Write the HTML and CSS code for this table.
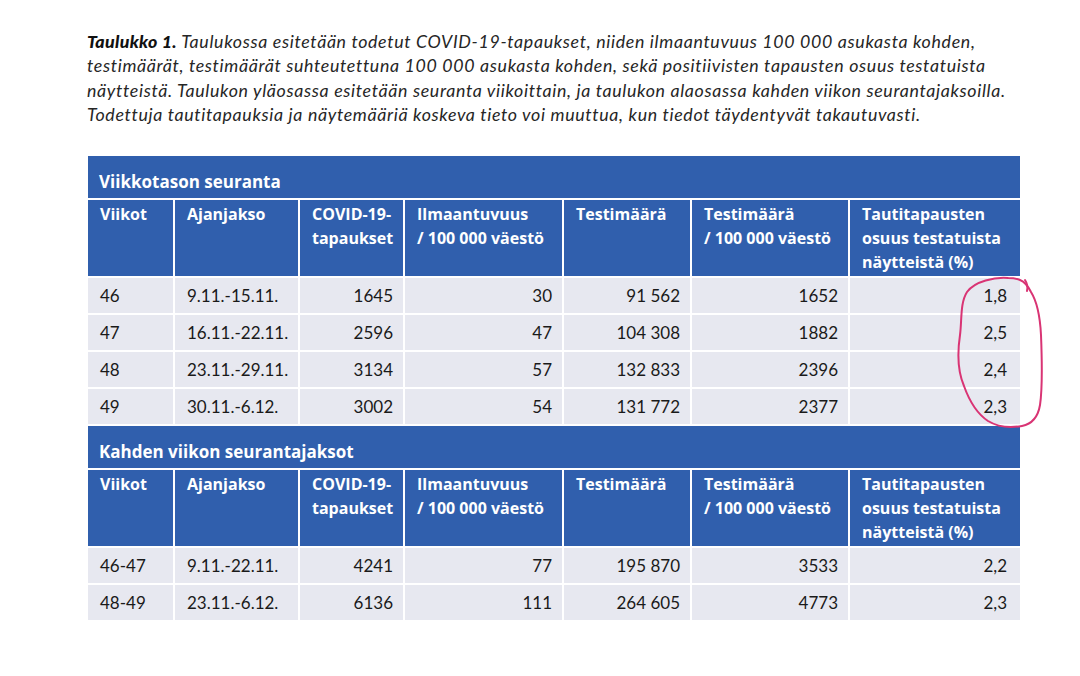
FILE: index.html
```html
<!DOCTYPE html>
<html lang="fi">
<head>
<meta charset="utf-8">
<title>Taulukko 1</title>
<link rel="stylesheet" href="styles.css">
</head>
<body>
<div class="page">
  <p class="caption"><b>Taulukko 1.</b> Taulukossa esitetään todetut COVID-19-tapaukset, niiden ilmaantuvuus 100 000 asukasta kohden,<br>testimäärät, testimäärät suhteutettuna 100 000 asukasta kohden, sekä positiivisten tapausten osuus testatuista<br>näytteistä. Taulukon yläosassa esitetään seuranta viikoittain, ja taulukon alaosassa kahden viikon seurantajaksoilla.<br>Todettuja tautitapauksia ja näytemääriä koskeva tieto voi muuttua, kun tiedot täydentyvät takautuvasti.</p>

  <table class="data">
    <colgroup>
      <col class="c1"><col class="c2"><col class="c3"><col class="c4"><col class="c5"><col class="c6"><col class="c7">
    </colgroup>
    <tbody>
      <tr class="band"><td colspan="7">Viikkotason seuranta</td></tr>
      <tr class="head">
        <td>Viikot</td><td>Ajanjakso</td><td>COVID-19-<br>tapaukset</td><td>Ilmaantuvuus<br>/ 100 000 väestö</td><td>Testimäärä</td><td>Testimäärä<br>/ 100 000 väestö</td><td>Tautitapausten<br>osuus testatuista<br>näytteistä (%)</td>
      </tr>
      <tr class="row"><td>46</td><td>9.11.-15.11.</td><td class="n">1645</td><td class="n">30</td><td class="n">91 562</td><td class="n">1652</td><td class="n">1,8</td></tr>
      <tr class="row"><td>47</td><td>16.11.-22.11.</td><td class="n">2596</td><td class="n">47</td><td class="n">104 308</td><td class="n">1882</td><td class="n">2,5</td></tr>
      <tr class="row"><td>48</td><td>23.11.-29.11.</td><td class="n">3134</td><td class="n">57</td><td class="n">132 833</td><td class="n">2396</td><td class="n">2,4</td></tr>
      <tr class="row"><td>49</td><td>30.11.-6.12.</td><td class="n">3002</td><td class="n">54</td><td class="n">131 772</td><td class="n">2377</td><td class="n">2,3</td></tr>
      <tr class="band"><td colspan="7">Kahden viikon seurantajaksot</td></tr>
      <tr class="head">
        <td>Viikot</td><td>Ajanjakso</td><td>COVID-19-<br>tapaukset</td><td>Ilmaantuvuus<br>/ 100 000 väestö</td><td>Testimäärä</td><td>Testimäärä<br>/ 100 000 väestö</td><td>Tautitapausten<br>osuus testatuista<br>näytteistä (%)</td>
      </tr>
      <tr class="row"><td>46-47</td><td>9.11.-22.11.</td><td class="n">4241</td><td class="n">77</td><td class="n">195 870</td><td class="n">3533</td><td class="n">2,2</td></tr>
      <tr class="row"><td>48-49</td><td>23.11.-6.12.</td><td class="n">6136</td><td class="n">111</td><td class="n">264 605</td><td class="n">4773</td><td class="n">2,3</td></tr>
    </tbody>
  </table>

  <svg class="mark" width="1080" height="676" viewBox="0 0 1080 676" aria-hidden="true">
    <path d="M1008 278 C995 277 975 281 967 292 C960 303 962 320 960 335 C957 355 958 372 964 386 C969 400 976 413 988 421 C998 427 1011 428 1022 426 C1032 424 1038 417 1040 405 C1043 385 1042 360 1041 335 C1040 315 1036 300 1031 292 C1028 286 1025 282 1020 280 C1015 278 1011 278 1008 278" fill="none" stroke="#d93474" stroke-width="2" stroke-linecap="round"/>
    <path d="M1025 280 C1027 283 1028 287 1027 291" fill="none" stroke="#d93474" stroke-width="2" stroke-linecap="round"/>
  </svg>
</div>
</body>
</html>
```

FILE: styles.css
```css
html, body {
  margin: 0;
  padding: 0;
  background: #ffffff;
}

.page {
  position: relative;
  width: 1080px;
  height: 676px;
  overflow: hidden;
  font-family: Lato, "Liberation Sans", sans-serif;
  color: #1f1f1f;
}

.caption {
  margin: 0;
  padding: 29px 0 0 87px;
  font-size: 17.8px;
  letter-spacing: 0.66px;
  line-height: 24.3px;
  font-style: italic;
  white-space: nowrap;
  color: #262626;
}

.caption b {
  font-weight: 900;
  letter-spacing: 0.3px;
  color: #111;
}

.data {
  margin: 28px 0 0 86px;
  border-collapse: collapse;
  table-layout: fixed;
  width: 934px;
}

.c1 { width: 87px; }
.c2 { width: 125px; }
.c3 { width: 105px; }
.c4 { width: 159px; }
.c5 { width: 128px; }
.c6 { width: 158px; }
.c7 { width: 172px; }

.data td {
  border: 2px solid #ffffff;
  padding: 0 12px;
  vertical-align: top;
}

.band td {
  background: #305fad;
  color: #ffffff;
  font-family: "Open Sans", Lato, sans-serif;
  font-weight: 700;
  font-size: 17px;
  height: 41px;
  padding: 0 11px 1px;
  vertical-align: bottom;
  line-height: 30px;
}

.head td {
  background: #305fad;
  color: #ffffff;
  font-family: "Open Sans", Lato, sans-serif;
  font-weight: 700;
  font-size: 16px;
  line-height: 24px;
  height: 74px;
  padding-top: 2px;
  padding-bottom: 0;
  white-space: nowrap;
}

.row td {
  background: #e7e8f0;
  font-size: 17px;
  height: 35px;
  line-height: 35px;
  padding-top: 0;
  padding-bottom: 0;
  vertical-align: middle;
  color: #1a1a1a;
}

.row td.n {
  text-align: right;
  padding-right: 10px;
}

.row td.n:last-child {
  padding-right: 13px;
}

.mark {
  position: absolute;
  left: 0;
  top: 0;
  pointer-events: none;
}
```
